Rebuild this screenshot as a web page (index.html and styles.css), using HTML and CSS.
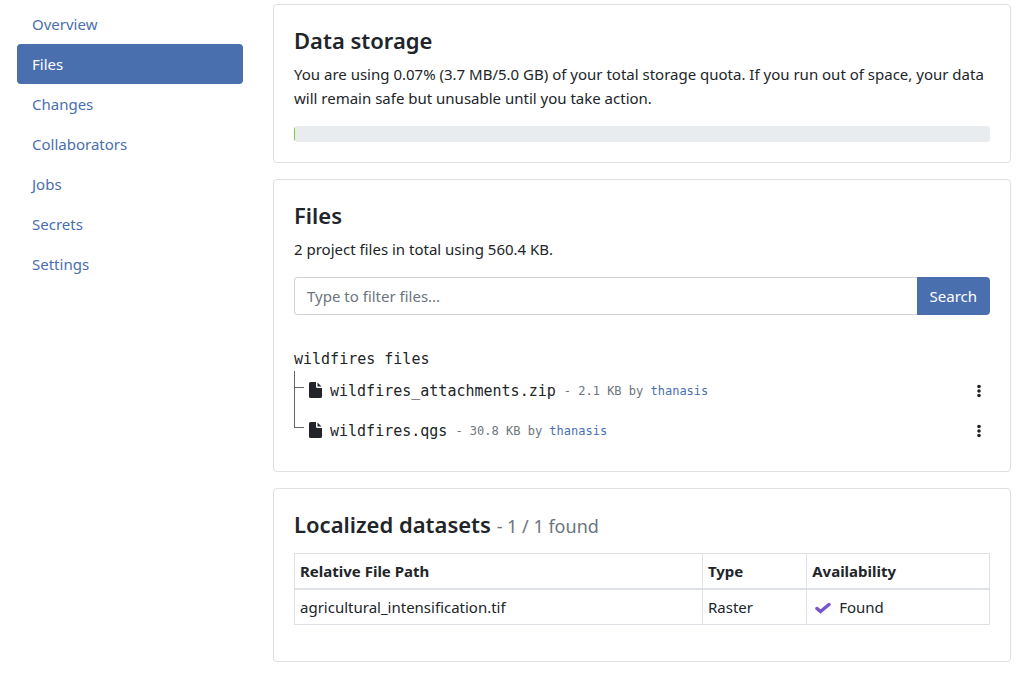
FILE: index.html
```html
<!DOCTYPE html>
<html lang="en">
<head>
<meta charset="utf-8">
<meta name="viewport" content="width=device-width, initial-scale=1">
<title>Files</title>
<link rel="stylesheet" href="styles.css">
</head>
<body>
<div class="layout">
  <nav class="sidebar" aria-label="Project">
    <a class="nav-link" href="#overview">Overview</a>
    <a class="nav-link active" href="#files" aria-current="page">Files</a>
    <a class="nav-link" href="#changes">Changes</a>
    <a class="nav-link" href="#collaborators">Collaborators</a>
    <a class="nav-link" href="#jobs">Jobs</a>
    <a class="nav-link" href="#secrets">Secrets</a>
    <a class="nav-link" href="#settings">Settings</a>
  </nav>
  <main class="content">
    <section class="card">
      <h4 class="title">Data storage</h4>
      <p class="text">You are using 0.07% (3.7 MB/5.0 GB) of your total storage quota. If you run out of space, your data will remain safe but unusable until you take action.</p>
      <div class="progress" role="progressbar" aria-label="Storage used" aria-valuenow="0.07" aria-valuemin="0" aria-valuemax="100">
        <div class="progress-bar" style="width: 0.07%"></div>
      </div>
    </section>

    <section class="card">
      <h4 class="title">Files</h4>
      <p class="text">2 project files in total using 560.4 KB.</p>
      <form class="search">
        <input class="search-input" type="text" placeholder="Type to filter files..." aria-label="Filter files">
        <button class="search-button" type="button">Search</button>
      </form>
      <div class="tree">
        <div class="tree-root">wildfires files</div>
        <ul class="tree-list">
          <li class="tree-item">
            <span class="branch"></span>
            <svg class="file-icon" viewBox="0 0 13 18" aria-hidden="true"><path d="M1.500 0H7v4.500Q7 6 8.500 6H13v8.500Q13 16 11.500 16H1.500Q0 16 0 14.500V1.500Q0 0 1.500 0Z"/><path d="M8.500 0.500 12.500 4.500H8.500Z"/></svg>
            <span class="file-name">wildfires_attachments.zip</span>
            <span class="file-meta">- 2.1 KB by <a href="#thanasis">thanasis</a></span>
            <button class="menu" type="button" aria-label="File actions"><svg class="dots" viewBox="0 0 5 14" aria-hidden="true"><circle cx="2" cy="2.500" r="1.800"/><circle cx="2" cy="7" r="1.800"/><circle cx="2" cy="11.500" r="1.800"/></svg></button>
          </li>
          <li class="tree-item">
            <span class="branch"></span>
            <svg class="file-icon" viewBox="0 0 13 18" aria-hidden="true"><path d="M1.500 0H7v4.500Q7 6 8.500 6H13v8.500Q13 16 11.500 16H1.500Q0 16 0 14.500V1.500Q0 0 1.500 0Z"/><path d="M8.500 0.500 12.500 4.500H8.500Z"/></svg>
            <span class="file-name">wildfires.qgs</span>
            <span class="file-meta">- 30.8 KB by <a href="#thanasis">thanasis</a></span>
            <button class="menu" type="button" aria-label="File actions"><svg class="dots" viewBox="0 0 5 14" aria-hidden="true"><circle cx="2" cy="2.500" r="1.800"/><circle cx="2" cy="7" r="1.800"/><circle cx="2" cy="11.500" r="1.800"/></svg></button>
          </li>
        </ul>
      </div>
    </section>

    <section class="card">
      <h4 class="title title-table">Localized datasets <small>- 1 / 1 found</small></h4>
      <table class="table">
        <thead>
          <tr><th class="col-path" scope="col">Relative File Path</th><th class="col-type" scope="col">Type</th><th scope="col">Availability</th></tr>
        </thead>
        <tbody>
          <tr>
            <td>agricultural_intensification.tif</td>
            <td>Raster</td>
            <td><span class="status"><svg class="check" viewBox="0 0 16 16" aria-hidden="true"><path d="M2 9.500 5.500 12.500 14 5.500"/></svg>Found</span></td>
          </tr>
        </tbody>
      </table>
    </section>
  </main>
</div>
</body>
</html>
```
FILE: styles.css
```css
* { box-sizing: border-box; }

body {
  margin: 0;
  padding: 4px 21px 12px 17px;
  background: #fff;
  color: #212529;
  font-family: "Noto Sans", sans-serif;
  font-size: 15px;
  line-height: 24px;
}

a { color: #4a6fae; text-decoration: none; }

.layout {
  display: grid;
  grid-template-columns: repeat(12, minmax(0, 1fr));
  column-gap: 30px;
}

.sidebar { grid-column: span 3; display: flex; flex-direction: column; }
.nav-link { padding: 8px 15px; border-radius: 4px; }
.nav-link.active { background: #4a6fae; color: #fff; }

.content { grid-column: span 9; display: flex; flex-direction: column; gap: 16px; }
.card { padding: 20px; border: 1px solid #dfdfdf; border-radius: 4px; }

.title { margin: 0 0 6px; font-size: 22px; line-height: 31px; font-weight: 600; }
.title small { color: #6c757d; font-size: 18px; line-height: 24px; font-weight: 400; }
.title-table { margin-bottom: 13px; }
.text { margin: 0 0 16px; }

.progress { display: flex; align-items: center; height: 16px; border-radius: 4px; background: #e9ecef; overflow: hidden; }
.progress-bar { height: 14px; min-width: 1px; background: #7ecb2d; }

.search { display: flex; height: 38px; }
.search-input {
  flex: 1;
  min-width: 0;
  padding: 6px 12px;
  border: 1px solid #ced4da;
  border-right: 0;
  border-radius: 4px 0 0 4px;
  color: inherit;
  font: inherit;
}
.search-input::placeholder { color: #6c757d; opacity: 1; }
.search-button {
  padding: 6px 13px;
  border: 0;
  border-radius: 0 4px 4px 0;
  background: #4a6fae;
  color: #fff;
  font: inherit;
}

.tree { margin-top: 32px; font-family: "DejaVu Sans Mono", monospace; }
.tree-list { margin: 0; padding: 0; list-style: none; }
.tree-item { display: flex; align-items: center; height: 40px; }
.branch { align-self: stretch; display: flex; flex-direction: column; width: 10px; margin-right: 5px; }
.branch::before { content: ""; height: 16px; border-left: 1px solid #666; border-bottom: 1px solid #666; }
.tree-item:not(:last-child) .branch::after { content: ""; flex: 1; border-left: 1px solid #666; }
.file-icon { width: 13px; height: 18px; margin-right: 8px; fill: #212529; }
.file-meta { margin-left: 8px; color: #6c757d; font-size: 12px; }
.menu { display: flex; margin-left: auto; padding: 8px; border: 0; background: none; }
.dots { width: 5px; height: 14px; fill: #212529; }

.table { width: 100%; margin: 0 0 16px; border-collapse: collapse; table-layout: fixed; }
.table th, .table td { padding: 5px; border: 1px solid #dee2e6; text-align: left; }
.table thead th { border-bottom-width: 2px; font-weight: 700; }
.col-path { width: 58.7%; }
.col-type { width: 15%; }
.status { display: flex; align-items: center; gap: 8px; padding-left: 3px; }
.check { width: 16px; height: 16px; fill: none; stroke: #7856c8; stroke-width: 3.5; stroke-linecap: round; }
```
